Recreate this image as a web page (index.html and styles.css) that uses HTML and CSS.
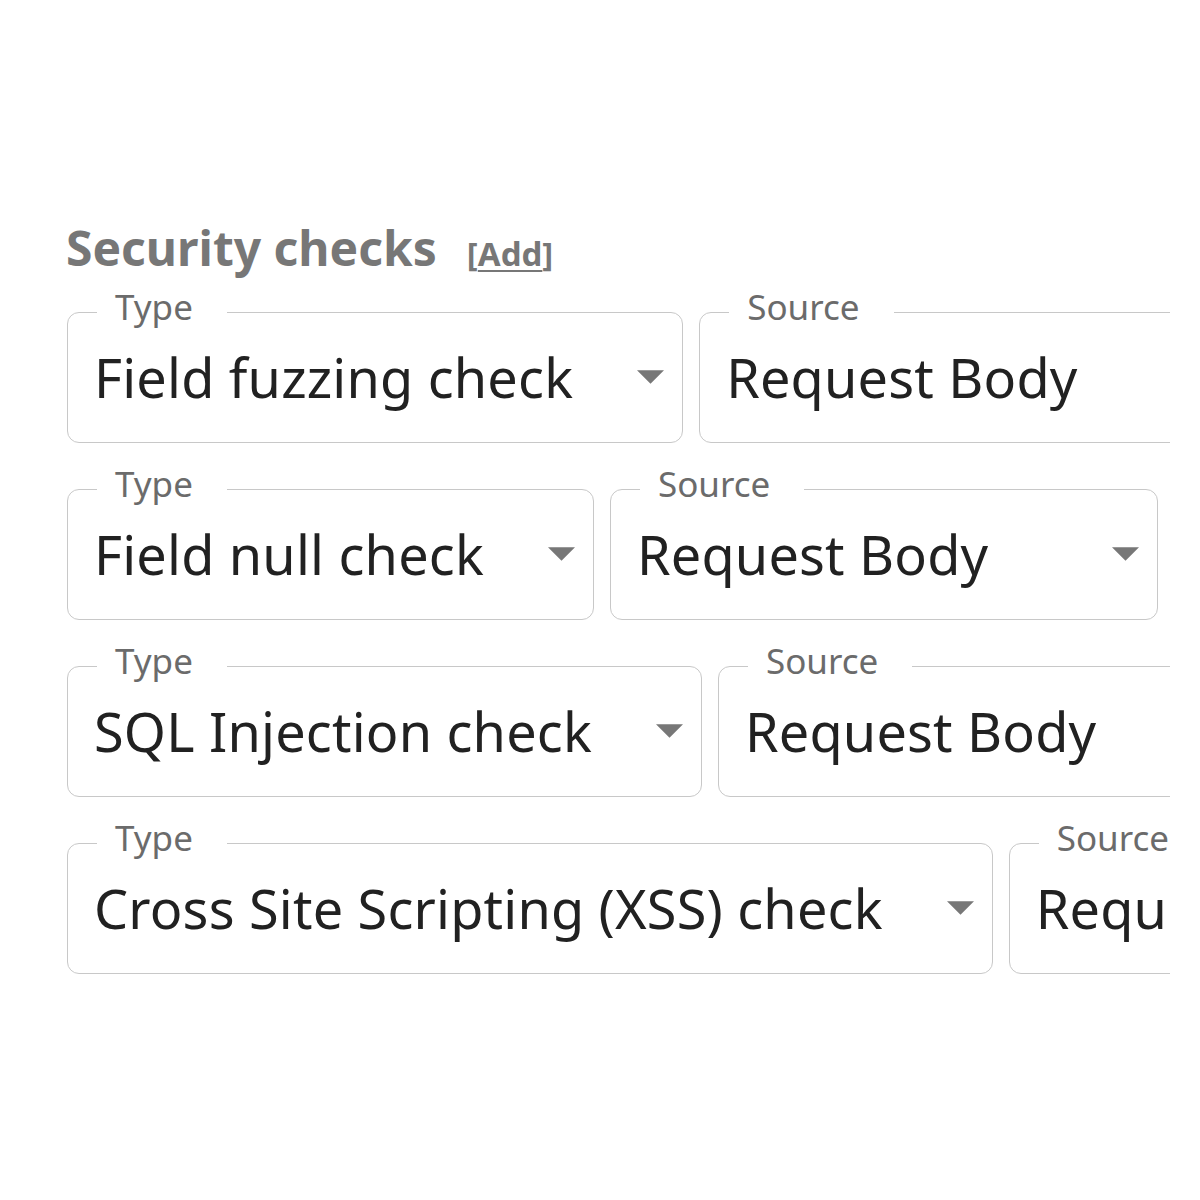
FILE: index.html
```html
<!DOCTYPE html>
<html lang="en">
<head>
  <meta charset="UTF-8" />
  <meta name="viewport" content="width=device-width, initial-scale=1.0" />
  <title>Security checks</title>
  <link rel="stylesheet" href="styles.css">
</head>
<body>
  <div class="panel">
    <div class="section-title">
      <h2>Security checks</h2>
      <span class="add-link">[<a href="#">Add</a>]</span>
    </div>

    <div class="check-row">
      <fieldset class="select">
        <legend>Type</legend>
        <div class="select-value">
          <span>Field fuzzing check</span>
          <svg class="arrow" viewBox="0 0 28 14"><polygon points="0,0 28,0 14,14"/></svg>
        </div>
      </fieldset>
      <fieldset class="select source">
        <legend>Source</legend>
        <div class="select-value">
          <span>Request Body</span>
          <svg class="arrow" viewBox="0 0 28 14"><polygon points="0,0 28,0 14,14"/></svg>
        </div>
      </fieldset>
    </div>

    <div class="check-row">
      <fieldset class="select">
        <legend>Type</legend>
        <div class="select-value">
          <span>Field null check</span>
          <svg class="arrow" viewBox="0 0 28 14"><polygon points="0,0 28,0 14,14"/></svg>
        </div>
      </fieldset>
      <fieldset class="select source">
        <legend>Source</legend>
        <div class="select-value">
          <span>Request Body</span>
          <svg class="arrow" viewBox="0 0 28 14"><polygon points="0,0 28,0 14,14"/></svg>
        </div>
      </fieldset>
    </div>

    <div class="check-row">
      <fieldset class="select">
        <legend>Type</legend>
        <div class="select-value">
          <span>SQL Injection check</span>
          <svg class="arrow" viewBox="0 0 28 14"><polygon points="0,0 28,0 14,14"/></svg>
        </div>
      </fieldset>
      <fieldset class="select source">
        <legend>Source</legend>
        <div class="select-value">
          <span>Request Body</span>
          <svg class="arrow" viewBox="0 0 28 14"><polygon points="0,0 28,0 14,14"/></svg>
        </div>
      </fieldset>
    </div>

    <div class="check-row">
      <fieldset class="select">
        <legend>Type</legend>
        <div class="select-value">
          <span>Cross Site Scripting (XSS) check</span>
          <svg class="arrow" viewBox="0 0 28 14"><polygon points="0,0 28,0 14,14"/></svg>
        </div>
      </fieldset>
      <fieldset class="select source">
        <legend>Source</legend>
        <div class="select-value">
          <span>Request Body</span>
          <svg class="arrow" viewBox="0 0 28 14"><polygon points="0,0 28,0 14,14"/></svg>
        </div>
      </fieldset>
    </div>
  </div>
</body>
</html>
```

FILE: styles.css
```css
* { margin: 0; padding: 0; box-sizing: border-box; }
body {
  font-family: 'Noto Sans', 'Open Sans', sans-serif;
  background: #fff;
  color: #212121;
}
.panel {
  width: 1170px;
  overflow: hidden;
  padding: 220px 0 0 66px;
  display: flex;
  flex-direction: column;
  gap: 24px;
}
.section-title {
  display: flex;
  align-items: baseline;
  gap: 30px;
  height: 56px;
  margin-bottom: -10px;
  color: #777;
}
.section-title h2 {
  font-size: 48px;
  line-height: 56px;
  font-weight: 700;
}
.add-link {
  font-size: 33px;
  font-weight: 700;
}
.add-link a {
  color: #777;
  text-decoration: underline;
  text-decoration-thickness: 2px;
  text-underline-offset: 4px;
}
.check-row {
  display: flex;
  gap: 16px;
  padding-left: 1px;
}
.select {
  flex-shrink: 0;
  border: 1px solid #c8c8c8;
  border-radius: 12px;
  margin: 0;
  padding: 0;
}
.select legend {
  margin-left: 29px;
  padding: 0 34px 10px 18px;
  font-size: 35px;
  line-height: 34px;
  color: #6b6b6b;
}
.select-value {
  display: flex;
  align-items: center;
  gap: 64px;
  padding: 16px 18px 38px 26px;
  font-size: 54px;
  line-height: 54px;
  letter-spacing: 0.2px;
  white-space: nowrap;
}
.select-value span {
  flex: 1;
}
.source {
  min-width: 548px;
}
.arrow {
  width: 27px;
  height: 14px;
  fill: #777;
  flex-shrink: 0;
}
```
